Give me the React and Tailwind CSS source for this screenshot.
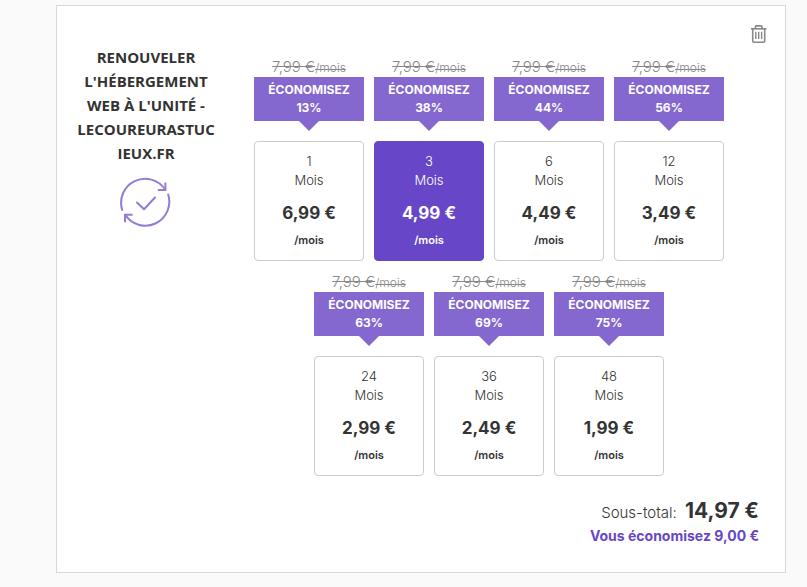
import React, { useState } from 'react';

const plans = [
    { months: 1, saving: 13, price: '6,99' },
    { months: 3, saving: 38, price: '4,99' },
    { months: 6, saving: 44, price: '4,49' },
    { months: 12, saving: 56, price: '3,49' },
    { months: 24, saving: 63, price: '2,99' },
    { months: 36, saving: 69, price: '2,49' },
    { months: 48, saving: 75, price: '1,99' },
];

const TrashIcon = () => (
    <svg width="16" height="18" viewBox="0 0 16 18" fill="none" stroke="#888888" aria-hidden="true">
        <path d="M0 3.8h15.4" strokeWidth="1.6" />
        <path d="M4.4 3.6V2Q4.4 .9 5.5 .9h4.4q1.1 0 1.1 1.1v1.6" strokeWidth="1.6" />
        <path d="M1.7 4v12q0 1.2 1.2 1.2h9.6q1.2 0 1.2-1.2V4" strokeWidth="1.6" />
        <path d="M4.8 6.7v7.3M7.7 6.7v7.3M10.6 6.7v7.3" strokeWidth="1.4" />
    </svg>
);

const RenewIcon = () => (
    <svg
        width="52"
        height="52"
        viewBox="0 0 52 52"
        fill="none"
        stroke="#957bd8"
        strokeWidth="2"
        strokeLinecap="round"
        strokeLinejoin="round"
        aria-hidden="true"
    >
        <path d="M2.2 34A24 24 0 0 1 45 13.4" />
        <path d="M45.4 6.6v7.4h-7.6" strokeLinecap="butt" strokeLinejoin="miter" />
        <path d="M48.2 18.5A24 24 0 0 1 5.6 39.4" />
        <path d="M5 46.2v-7.4h7.6" strokeLinecap="butt" strokeLinejoin="miter" />
        <path d="M17 26.5l7 6.8L35 21.5" />
    </svg>
);

const PlanOption = ({ plan, checked, onSelect }) => (
    <label className="flex w-[110px] cursor-pointer flex-col items-center text-center">
        <span className="text-[15px] leading-[21px] font-light text-[#888888] line-through">
            7,99 €<span className="text-xs">/mois</span>
        </span>
        <span className="w-full bg-[#8467cf] py-1 text-xs leading-[18px] font-bold text-white">
            ÉCONOMISEZ
            <br />
            {plan.saving}%
        </span>
        <span className="h-0 w-0 border-x-10 border-t-10 border-x-transparent border-t-[#8467cf]"></span>
        <input
            type="radio"
            name="duration"
            value={plan.months}
            checked={checked}
            onChange={onSelect}
            className="peer sr-only"
        />
        <span className="mt-2.5 flex h-[120px] w-full flex-col items-center rounded border border-[#cccccc] bg-white pt-2.5 text-[#333333] peer-checked:border-[#6747c7] peer-checked:bg-[#6747c7] peer-checked:text-white">
            <span className="text-[13px] leading-[19px] font-light">
                {plan.months}
                <br />
                Mois
            </span>
            <span className="mt-2.5 text-[17px] leading-[26px] font-bold">{plan.price} €</span>
            <span className="mt-1.5 text-[11px] leading-4 font-semibold">/mois</span>
        </span>
    </label>
);

export default function App() {
    const [selected, setSelected] = useState(3);

    return (
        <main className="min-h-screen bg-[#fafafa] pt-[5px] pr-[21px] pb-3.5 pl-14 font-['Inter','Liberation_Sans',sans-serif]">
            <section className="border border-[#d8d8d8] bg-white pb-[26px]">
                {/* Remove item */}
                <div className="flex justify-end pt-[19px] pr-[18px]">
                    <button type="button" aria-label="Supprimer" className="cursor-pointer">
                        <TrashIcon />
                    </button>
                </div>

                {/* Product and durations */}
                <div className="flex items-start gap-5 pt-0.5 pr-[42px] pl-5">
                    <div className="flex w-[138px] shrink-0 flex-col items-center">
                        <h2 className="w-full text-center font-['Open_Sans','Liberation_Sans',sans-serif] text-[15px] leading-6 font-bold break-words text-[#333333] uppercase">
                            Renouveler l'hébergement web à l'unité - lecoureurastucieux.fr
                        </h2>
                        <div className="pt-[11px]">
                            <RenewIcon />
                        </div>
                    </div>
                    <div className="flex flex-1 flex-wrap justify-center gap-2.5 pt-[11px]">
                        {plans.map((plan) => (
                            <PlanOption
                                key={plan.months}
                                plan={plan}
                                checked={selected === plan.months}
                                onSelect={() => setSelected(plan.months)}
                            />
                        ))}
                    </div>
                </div>

                {/* Totals */}
                <div className="pt-[22px] pr-[26px] text-right">
                    <p className="text-[15px] leading-[26px] font-light text-[#333333]">
                        Sous-total: <strong className="ml-1 text-[21px] leading-[26px] font-bold">14,97 €</strong>
                    </p>
                    <p className="text-sm leading-5 font-bold text-[#6747c7]">Vous économisez 9,00 €</p>
                </div>
            </section>
        </main>
    );
}
